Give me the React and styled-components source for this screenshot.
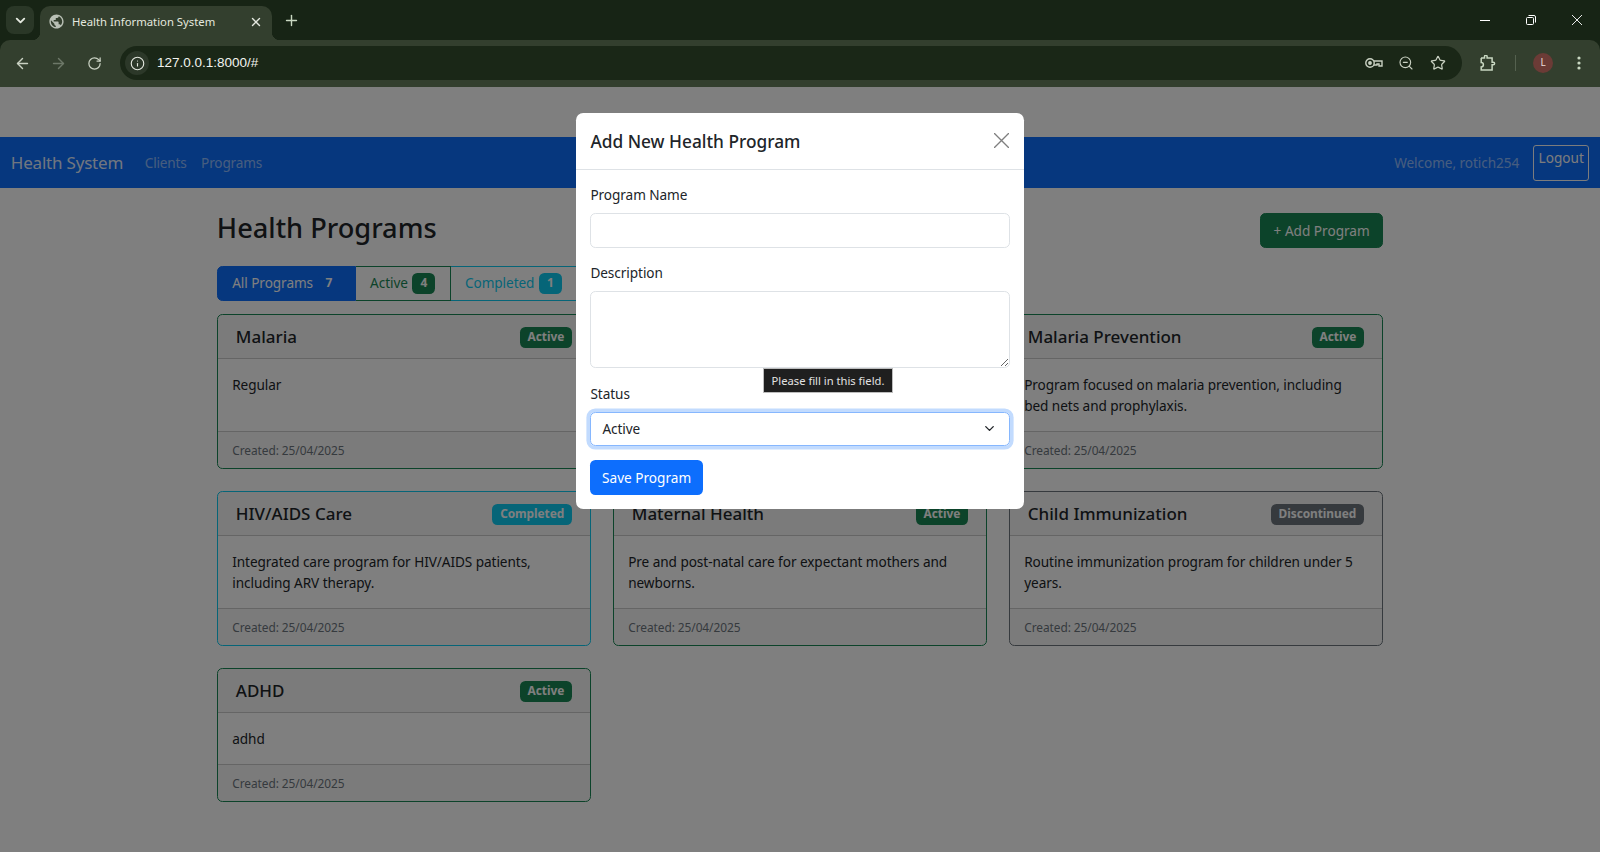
import React from 'react';
import styled, { createGlobalStyle } from 'styled-components';
import { ArrowLeft, ArrowRight, RotateCw, Info, ZoomOut, Star, ChevronDown, X, Plus } from 'lucide-react';
import { MdPublic } from 'react-icons/md';

const uiFont = `'Noto Sans', 'Open Sans', Arial, sans-serif`;

const GlobalStyle = createGlobalStyle`
  * { box-sizing: border-box; }
  html, body { margin: 0; padding: 0; height: 100%; overflow: hidden; }
  body { font-family: ${uiFont}; font-size: 13.6px; letter-spacing: -0.06px; line-height: 21.6px; color: #212529; background: #fff; }
`;

const Window = styled.div`
  display: flex;
  flex-direction: column;
  height: 852px;
  background: #172415;
`;

/* browser frame */
const TabStrip = styled.div`
  display: flex;
  align-items: flex-end;
  height: 40px;
  padding-left: 6px;
  color: #e4e8df;
`;
const TabSearch = styled.div`
  width: 28px;
  height: 28px;
  margin: 0 6px 6px 0;
  display: flex;
  align-items: center;
  justify-content: center;
  border-radius: 8px;
  background: #2a3727;
`;
const ActiveTab = styled.div`
  position: relative;
  width: 232px;
  height: 34px;
  padding: 0 9px 3px 8px;
  display: flex;
  align-items: center;
  gap: 7px;
  border-radius: 10px 10px 0 0;
  background: #333f2e;
  font-size: 11.3px;
  letter-spacing: 0;

  &:before,
  &:after {
    content: '';
    position: absolute;
    bottom: 0;
    width: 8px;
    height: 8px;
  }
  &:before {
    left: -8px;
    background: radial-gradient(circle at 0 0, transparent 8px, #333f2e 8.5px);
  }
  &:after {
    right: -8px;
    background: radial-gradient(circle at 100% 0, transparent 8px, #333f2e 8.5px);
  }
`;
const TabTitle = styled.span`
  flex: 1;
  white-space: nowrap;
`;
const NewTab = styled.div`
  margin: 0 0 6px 11px;
  height: 28px;
  display: flex;
  align-items: center;
`;
const WindowControls = styled.div`
  margin-left: auto;
  height: 40px;
  display: flex;
  align-items: center;
`;
const WindowButton = styled.div`
  width: 46px;
  display: flex;
  justify-content: center;
  color: #fff;
`;
const Toolbar = styled.div`
  height: 47px;
  padding: 6px 0 7px 4px;
  display: flex;
  align-items: center;
  border-radius: 10px 10px 0 0;
  background: #333f2e;
  color: #c9d1c2;
`;
const NavIcon = styled.div`
  width: 36px;
  display: flex;
  justify-content: center;
  color: ${(p) => (p.$off ? '#6d7868' : '#c9d1c2')};
`;
const Omnibox = styled.div`
  flex: 1;
  height: 34px;
  margin-left: 8px;
  padding: 0 8px 0 5px;
  display: flex;
  align-items: center;
  border-radius: 17px;
  background: #1a2717;
`;
const SiteInfo = styled.div`
  width: 24px;
  height: 24px;
  display: flex;
  align-items: center;
  justify-content: center;
  border-radius: 50%;
  background: #2c3829;
  color: #e4e8df;
`;
const Url = styled.div`
  flex: 1;
  margin-left: 8px;
  font-family: 'Liberation Sans', Arial, sans-serif;
  font-size: 13.5px;
  letter-spacing: 0;
  color: #f2f4ef;
`;
const BoxIcon = styled.div`
  width: 32px;
  display: flex;
  justify-content: center;
`;
const ToolbarEnd = styled.div`
  display: flex;
  align-items: center;
  width: 138px;
  padding-left: 18px;
`;
const Divider = styled.div`
  width: 1px;
  height: 16px;
  margin: 0 17px 0 19px;
  background: #55614f;
`;
const Avatar = styled.div`
  width: 20px;
  height: 20px;
  display: flex;
  align-items: center;
  justify-content: center;
  border-radius: 50%;
  background: #6b3b36;
  color: #e9dcda;
  font-size: 10px;
`;
const MenuDots = styled.div`
  margin-left: 24px;
  display: flex;
`;

/* page underneath the modal */
const Viewport = styled.div`
  position: relative;
  flex: 1;
  padding-top: 50px;
  background: #fff;
`;
const Navbar = styled.nav`
  height: 51px;
  padding: 0 10.8px;
  display: flex;
  align-items: center;
  background: #0d6efd;
`;
const Brand = styled.div`
  margin-right: 14.4px;
  font-size: 17px;
  letter-spacing: -0.2px;
  color: rgba(255, 255, 255, 0.9);
  white-space: nowrap;
`;
const NavLink = styled.div`
  padding: 0 7.2px;
  letter-spacing: -0.16px;
  color: rgba(255, 255, 255, 0.55);
`;
const Welcome = styled.div`
  margin-left: auto;
  margin-right: 14px;
  color: rgba(255, 255, 255, 0.55);
`;
const LogoutButton = styled.button`
  width: 56px;
  height: 36px;
  padding: 0 0 10px;
  margin-top: 1px;
  border: 1px solid #f8f9fa;
  border-radius: 3px;
  background: transparent;
  color: #f8f9fa;
  font: inherit;
  line-height: 21.6px;
`;
const Container = styled.main`
  width: 1166.4px;
  margin: 0 auto;
  padding-top: 21.6px;
`;
const PageHead = styled.div`
  height: 41.8px;
  margin-bottom: 14.4px;
  display: flex;
  align-items: center;
  justify-content: space-between;
`;
const PageTitle = styled.h2`
  margin: 0 0 4px;
  font-size: 27.2px;
  letter-spacing: 0;
  line-height: 34.6px;
  font-weight: 500;
`;
const AddButton = styled.button`
  height: 34.2px;
  padding: 0 12.5px;
  border: 1px solid #198754;
  border-radius: 5.4px;
  background: #198754;
  color: #fff;
  font: inherit;
`;
const Tabs = styled.div`
  height: 35px;
  margin-bottom: 13.5px;
  display: flex;
`;
const toneColors = {
  primary: '#0d6efd',
  success: '#198754',
  info: '#0dcaf0',
  secondary: '#6c757d',
};
const TabItem = styled.div`
  padding: 0 14.4px;
  display: flex;
  align-items: center;
  gap: 4.5px;
  border: 1px solid ${(p) => toneColors[p.$tone]};
  border-left-width: ${(p) => (p.$first ? '1px' : '0')};
  border-radius: ${(p) => (p.$first ? '5.4px 0 0 5.4px' : '0')};
  background: ${(p) => (p.$selected ? toneColors[p.$tone] : '#fff')};
  color: ${(p) => (p.$selected ? '#fff' : toneColors[p.$tone])};
  white-space: nowrap;
`;
const Badge = styled.span`
  height: 21px;
  padding: 0 8px;
  display: inline-flex;
  align-items: center;
  border-radius: 5.4px;
  background: ${(p) => toneColors[p.$tone]};
  color: #fff;
  font-size: 11.9px;
  font-weight: 700;
  line-height: 1;
`;
const StatusBadge = styled(Badge)`
  margin-top: 1px;
`;
const CardGrid = styled.div`
  display: grid;
  grid-template-columns: repeat(3, 1fr);
  gap: 22px 21.6px;
`;
const Card = styled.article`
  display: flex;
  flex-direction: column;
  border: 1px solid ${(p) => toneColors[p.$tone]};
  border-radius: 5.4px;
  overflow: hidden;
`;
const CardHeader = styled.header`
  height: 44px;
  padding: 0 18px;
  display: flex;
  align-items: center;
  justify-content: space-between;
  border-bottom: 1px solid rgba(0, 0, 0, 0.175);
  background: rgba(0, 0, 0, 0.03);
`;
const CardTitle = styled.h5`
  margin: 0;
  font-size: 17px;
  letter-spacing: 0;
  line-height: 21.6px;
  font-weight: 500;
`;
const CardBody = styled.p`
  flex: 1;
  margin: 0;
  padding: 14.4px;
`;
const CardFooter = styled.footer`
  height: 37px;
  padding: 8.2px 14.4px 0;
  border-top: 1px solid rgba(0, 0, 0, 0.175);
  background: rgba(0, 0, 0, 0.03);
  color: #6c757d;
  font-size: 11.9px;
`;

/* modal */
const Backdrop = styled.div`
  position: absolute;
  inset: 0;
  background: rgba(0, 0, 0, 0.5);
`;
const Modal = styled.form`
  position: absolute;
  top: 26px;
  left: 576px;
  width: 448px;
  border-radius: 7.2px;
  background: #fff;
`;
const ModalHeader = styled.div`
  height: 57px;
  padding: 2px 14.4px 0;
  display: flex;
  align-items: center;
  justify-content: space-between;
  border-bottom: 1px solid #dee2e6;
`;
const ModalTitle = styled.h5`
  margin: 0;
  font-size: 17.3px;
  letter-spacing: 0;
  font-weight: 500;
`;
const CloseButton = styled.button`
  margin: -3px 1px 0 0;
  padding: 0;
  display: flex;
  border: 0;
  background: none;
  color: #7f7f7f;
`;
const ModalBody = styled.div`
  position: relative;
  padding: 14.4px;
`;
const Field = styled.div`
  margin-bottom: 14.4px;
`;
const Label = styled.label`
  display: block;
  margin-bottom: 7.2px;
`;
const TextInput = styled.input`
  display: block;
  width: 100%;
  height: 34.6px;
  border: 1px solid #dee2e6;
  border-radius: 5.4px;
  outline: 0;
`;
const TextArea = styled.textarea`
  display: block;
  width: 100%;
  height: 77.4px;
  border: 1px solid #dee2e6;
  border-radius: 5.4px;
  outline: 0;
`;
const StatusSelect = styled.div`
  height: 34.6px;
  padding: 0 12px 0 11px;
  display: flex;
  align-items: center;
  justify-content: space-between;
  border: 1px solid #86b7fe;
  border-radius: 5.4px;
  box-shadow: 0 0 0 3.6px rgba(13, 110, 253, 0.25);
  color: #212529;
`;
const SaveButton = styled.button`
  height: 34.6px;
  padding: 0 11.7px;
  border: 0;
  border-radius: 5.4px;
  background: #0d6efd;
  color: #fff;
  font: inherit;
`;
const ValidationTip = styled.div`
  position: absolute;
  top: 198px;
  left: 187px;
  width: 130px;
  height: 25px;
  display: flex;
  align-items: center;
  justify-content: center;
  border: 1px solid #bdbdbd;
  background: #1f1f1f;
  color: #e2e2e2;
  font-size: 11.2px;
  letter-spacing: 0;
  white-space: nowrap;
`;

const KeyIcon = () => (
  <svg width="18" height="12" viewBox="0 0 18 12" fill="none" stroke="currentColor" strokeWidth="1.4">
    <circle cx="5" cy="6" r="4.2" />
    <circle cx="5" cy="6" r="1.2" fill="currentColor" />
    <path d="M9 4h8v5h-3V7h-2v1H9" />
  </svg>
);
const PuzzleIcon = () => (
  <svg width="16" height="16" viewBox="0 0 16 16" fill="none" stroke="#c9d8c2" strokeWidth="1.5">
    <path d="M1 3h3.5V1.6a1.3 1.3 0 0 1 2.6 0V3h5v4.2h1.2a1.3 1.3 0 0 1 0 2.6h-1.2V15H1.2v-3a1.6 1.6 0 0 0 0-4.4V3z" />
  </svg>
);
const RestoreIcon = () => (
  <svg width="10" height="10" viewBox="0 0 10 10" fill="none" stroke="currentColor">
    <rect x="0.5" y="2.5" width="7" height="7" rx="1" />
    <path d="M2.5 0.5h5.5a1.5 1.5 0 0 1 1.5 1.5v5.5" />
  </svg>
);
const MinimizeIcon = () => (
  <svg width="10" height="10" viewBox="0 0 10 10" stroke="currentColor">
    <path d="M0 5.5h10" />
  </svg>
);
const CloseIcon = ({ size = 10 }) => (
  <svg width={size} height={size} viewBox="0 0 10 10" stroke="currentColor" strokeWidth="0.9">
    <path d="M0 0l10 10M10 0L0 10" />
  </svg>
);
const DotsIcon = () => (
  <svg width="4" height="14" viewBox="0 0 4 14" fill="#c9d8c2">
    <circle cx="2" cy="2" r="1.6" />
    <circle cx="2" cy="7" r="1.6" />
    <circle cx="2" cy="12" r="1.6" />
  </svg>
);

const tabs = [
  { label: 'All Programs', count: 7, tone: 'primary', selected: true },
  { label: 'Active', count: 4, tone: 'success' },
  { label: 'Completed', count: 1, tone: 'info' },
];

// null keeps the grid cell the open modal sits over
const programs = [
  { name: 'Malaria', status: 'Active', tone: 'success', text: 'Regular' },
  null,
  {
    name: 'Malaria Prevention',
    status: 'Active',
    tone: 'success',
    text: 'Program focused on malaria prevention, including bed nets and prophylaxis.',
  },
  {
    name: 'HIV/AIDS Care',
    status: 'Completed',
    tone: 'info',
    text: 'Integrated care program for HIV/AIDS patients, including ARV therapy.',
  },
  {
    name: 'Maternal Health',
    status: 'Active',
    tone: 'success',
    text: 'Pre and post-natal care for expectant mothers and newborns.',
  },
  {
    name: 'Child Immunization',
    status: 'Discontinued',
    tone: 'secondary',
    text: 'Routine immunization program for children under 5 years.',
  },
  { name: 'ADHD', status: 'Active', tone: 'success', text: 'adhd' },
];

const App = () => (
  <Window>
    <GlobalStyle />
    <TabStrip>
      <TabSearch>
        <ChevronDown size={15} strokeWidth={3} />
      </TabSearch>
      <ActiveTab>
        <MdPublic size={17} color="#b9c0b5" />
        <TabTitle>Health Information System</TabTitle>
        <X size={14} strokeWidth={2.4} />
      </ActiveTab>
      <NewTab>
        <Plus size={17} strokeWidth={2} color="#c9d8c2" />
      </NewTab>
      <WindowControls>
        <WindowButton>
          <MinimizeIcon />
        </WindowButton>
        <WindowButton>
          <RestoreIcon />
        </WindowButton>
        <WindowButton>
          <CloseIcon />
        </WindowButton>
      </WindowControls>
    </TabStrip>
    <Toolbar>
      <NavIcon>
        <ArrowLeft size={17} strokeWidth={2} />
      </NavIcon>
      <NavIcon $off>
        <ArrowRight size={17} strokeWidth={2} />
      </NavIcon>
      <NavIcon>
        <RotateCw size={15} strokeWidth={2} />
      </NavIcon>
      <Omnibox>
        <SiteInfo>
          <Info size={15} strokeWidth={1.8} />
        </SiteInfo>
        <Url>127.0.0.1:8000/#</Url>
        <BoxIcon>
          <KeyIcon />
        </BoxIcon>
        <BoxIcon>
          <ZoomOut size={16} strokeWidth={1.7} />
        </BoxIcon>
        <BoxIcon>
          <Star size={16} strokeWidth={1.8} />
        </BoxIcon>
      </Omnibox>
      <ToolbarEnd>
        <PuzzleIcon />
        <Divider />
        <Avatar>L</Avatar>
        <MenuDots>
          <DotsIcon />
        </MenuDots>
      </ToolbarEnd>
    </Toolbar>

    <Viewport>
      <Navbar>
        <Brand>Health System</Brand>
        <NavLink>Clients</NavLink>
        <NavLink>Programs</NavLink>
        <Welcome>Welcome, rotich254</Welcome>
        <LogoutButton type="button">Logout</LogoutButton>
      </Navbar>
      <Container>
        <PageHead>
          <PageTitle>Health Programs</PageTitle>
          <AddButton type="button">+ Add Program</AddButton>
        </PageHead>
        <Tabs>
          {tabs.map((tab, i) => (
            <TabItem key={tab.label} $tone={tab.tone} $selected={tab.selected} $first={i === 0}>
              {tab.label}
              <Badge $tone={tab.tone}>{tab.count}</Badge>
            </TabItem>
          ))}
        </Tabs>
        <CardGrid>
          {programs.map((program, i) =>
            program ? (
              <Card key={program.name} $tone={program.tone}>
                <CardHeader>
                  <CardTitle>{program.name}</CardTitle>
                  <StatusBadge $tone={program.tone}>{program.status}</StatusBadge>
                </CardHeader>
                <CardBody>{program.text}</CardBody>
                <CardFooter>Created: 25/04/2025</CardFooter>
              </Card>
            ) : (
              <div key={i} />
            ),
          )}
        </CardGrid>
      </Container>

      <Backdrop />
      <Modal>
        <ModalHeader>
          <ModalTitle>Add New Health Program</ModalTitle>
          <CloseButton type="button" aria-label="Close">
            <CloseIcon size={15} />
          </CloseButton>
        </ModalHeader>
        <ModalBody>
          <Field>
            <Label>Program Name</Label>
            <TextInput />
          </Field>
          <Field>
            <Label>Description</Label>
            <TextArea />
          </Field>
          <Field>
            <Label>Status</Label>
            <StatusSelect>
              Active
              <ChevronDown size={15} strokeWidth={2.2} />
            </StatusSelect>
          </Field>
          <SaveButton type="button">Save Program</SaveButton>
          <ValidationTip>Please fill in this field.</ValidationTip>
        </ModalBody>
      </Modal>
    </Viewport>
  </Window>
);

export default App;
